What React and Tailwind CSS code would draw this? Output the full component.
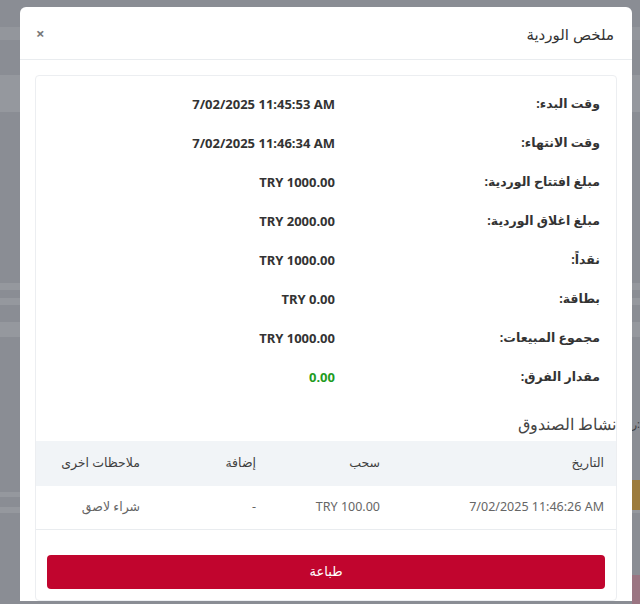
import React from "react";

const rows = [
  ["وقت البدء:", "7/02/2025 11:45:53 AM"],
  ["وقت الانتهاء:", "7/02/2025 11:46:34 AM"],
  ["مبلغ افتتاح الوردية:", "TRY 1000.00"],
  ["مبلغ اغلاق الوردية:", "TRY 2000.00"],
  ["نقداً:", "TRY 1000.00"],
  ["بطاقة:", "TRY 0.00"],
  ["مجموع المبيعات:", "TRY 1000.00"],
  ["مقدار الفرق:", "0.00", true],
];

function Background() {
  // الصفحة المعتمة خلف النافذة
  return (
    <div className="h-full w-full bg-[#8a8d94]">
      <div className="h-[27px]" />
      <div className="h-[13px] bg-[#93969c]" />
      <div className="h-[35px]" />
      <div className="h-[37px] bg-[#95989e]" />
      <div className="h-[171px]" />
      <div className="h-[7px] bg-[#95989e]" />
      <div className="h-[8px]" />
      <div className="h-[7px] bg-[#95989e]" />
      <div className="h-[17px]" />
      <div className="h-[15px] bg-[#95989e]" />
      <div className="h-[155px]" />
      <div className="h-[5px] bg-[#95989e]" />
      <div className="h-[10px]" />
      <div className="h-[6px] bg-[#95989e]" />
    </div>
  );
}

const th = "flex h-[45px] items-center whitespace-nowrap bg-[#f1f4f7] px-[12px] text-[12.5px] text-[#3f3f3f]";
const td = "flex h-[44px] items-center whitespace-nowrap border-b border-[#e9ecef] px-[12px] text-[12.5px] text-[#666]";

export default function App() {
  return (
    <div
      className="relative h-[604px] w-[640px] overflow-hidden"
      style={{ fontFamily: '"Noto Sans", "DejaVu Sans", sans-serif' }}
    >
      <Background />
      <div className="absolute right-0 top-[480px] h-[30px] w-[8px] bg-[#9c7b3d]" />
      <div className="absolute right-0 top-[575px] h-[29px] w-[8px] bg-[#9a7582]" />
      <div className="absolute right-0 top-[418px] text-[11px] leading-none text-[#3a3a3a]">ر:</div>

      <div dir="rtl" className="absolute left-[20px] top-[7px] w-[612px] rounded-t-[6px] bg-white">
        <div className="flex h-[53px] items-center justify-between border-b border-[#e9ecef] pl-[16px] pr-[18px]">
          <h2 className="pt-[2px] text-[15px] font-normal text-[#333]">ملخص الوردية</h2>
          <span className="text-[15px] font-bold leading-none text-[#777]">×</span>
        </div>

        <div className="px-[15px] pt-[15px]">
          <div className="rounded-[4px] border border-[#eceef1] pb-[11px] pt-[9px]">
            {rows.map(([label, value, green]) => (
              <div key={label} className="flex h-[39px] items-center pr-[16px]">
                <div className="w-[265px] text-[12.5px] font-bold text-[#333]">{label}</div>
                <div
                  dir="ltr"
                  className={
                    green
                      ? "text-[13px] font-bold text-[#1f9c1f]"
                      : "text-[13px] font-bold text-[#333]"
                  }
                >
                  {value}
                </div>
              </div>
            ))}

            <div className="pb-[3px] pt-[14px] text-[16px] font-light leading-[27px] text-[#444]">
              نشاط الصندوق
            </div>

            <div className="grid grid-cols-[224px_124px_116px_1fr]">
              <div className={th}>التاريخ</div>
              <div className={th}>سحب</div>
              <div className={th}>إضافة</div>
              <div className={th}>ملاحظات اخرى</div>
              <div className={td}>
                <span dir="ltr">7/02/2025 11:46:26 AM</span>
              </div>
              <div className={td}>
                <span dir="ltr">TRY 100.00</span>
              </div>
              <div className={td}>-</div>
              <div className={td}>شراء لاصق</div>
            </div>

            <div className="px-[11px] pt-[25px]">
              <button
                type="button"
                className="h-[34px] w-full rounded-[4px] bg-[#c1052e] text-[13px] text-white"
              >
                طباعة
              </button>
            </div>
          </div>
        </div>
      </div>
    </div>
  );
}
